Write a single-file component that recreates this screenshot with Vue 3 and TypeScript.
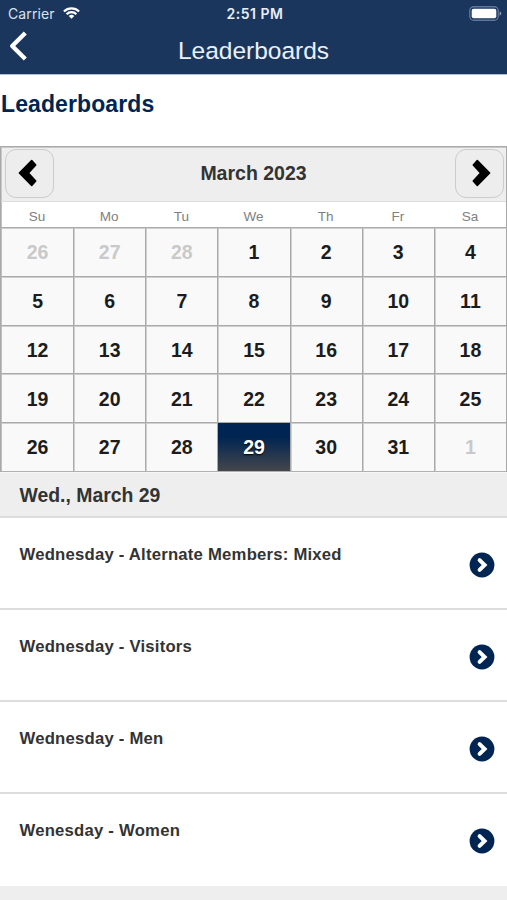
<script setup lang="ts">
interface Day {
  n: number
  other: boolean
  selected: boolean
}

const weekdays: string[] = ['Su', 'Mo', 'Tu', 'We', 'Th', 'Fr', 'Sa']

const days: Day[] = Array.from({ length: 35 }, (_, i) => {
  const date = new Date(2023, 1, 26 + i)
  const other = date.getMonth() !== 2
  return { n: date.getDate(), other, selected: !other && date.getDate() === 29 }
})

const events: string[] = [
  'Wednesday - Alternate Members: Mixed',
  'Wednesday - Visitors',
  'Wednesday - Men',
  'Wenesday - Women',
]
</script>

<template>
  <div class="screen">
    <header class="topbar">
      <div class="status">
        <div class="carrier">
          <span>Carrier</span>
          <svg class="wifi" viewBox="0 0 17 12" fill="none" stroke="#fff" stroke-width="2.1">
            <path d="M0.9 4.5a10.7 10.7 0 0 1 15.2 0" />
            <path d="M3.6 7.2a6.9 6.9 0 0 1 9.8 0" />
            <path d="M8.5 11.8L5.7 9a4 4 0 0 1 5.6 0z" fill="#fff" stroke="none" />
          </svg>
        </div>
        <span class="time">2:51 PM</span>
        <svg class="battery" viewBox="0 0 33 15">
          <rect x="0.75" y="0.75" width="28.5" height="13.5" rx="4" fill="none" stroke="#5f779a" stroke-width="1.3" />
          <rect x="2.7" y="2.7" width="24.6" height="9.6" rx="2" fill="#fff" />
          <path d="M30.6 5.3q1.7 .8 1.7 2.2t-1.7 2.2z" fill="#8c9fb8" />
        </svg>
      </div>
      <div class="nav">
        <svg class="back" viewBox="0 0 20 30" fill="none" stroke="#fff" stroke-width="4.3" stroke-linejoin="round">
          <path d="M17.3 2L4.2 15l13.1 13" />
        </svg>
        <h1>Leaderboards</h1>
        <span></span>
      </div>
    </header>

    <h2 class="heading">Leaderboards</h2>

    <section class="calendar">
      <div class="month">
        <button class="step prev" aria-label="Previous month">
          <svg viewBox="0 0 20 28" stroke="#000" stroke-width="1.6" stroke-linejoin="round">
            <path d="M1.4 14L13.7 1.6l4 4.4L10.4 14l7.3 8-4 4.4z" />
          </svg>
        </button>
        <span>March 2023</span>
        <button class="step next" aria-label="Next month">
          <svg viewBox="0 0 20 28" stroke="#000" stroke-width="1.6" stroke-linejoin="round">
            <path d="M18.6 14L6.3 1.6l-4 4.4L9.6 14l-7.3 8 4 4.4z" />
          </svg>
        </button>
      </div>
      <div class="weekdays">
        <span v-for="w in weekdays" :key="w">{{ w }}</span>
      </div>
      <div class="days">
        <div v-for="(d, i) in days" :key="i" class="day" :class="{ other: d.other, selected: d.selected }">
          {{ d.n }}
        </div>
      </div>
    </section>

    <div class="divider">Wed., March 29</div>

    <ul class="events">
      <li v-for="e in events" :key="e">
        <span>{{ e }}</span>
        <svg viewBox="0 0 26 26">
          <circle cx="13" cy="13" r="12.4" fill="#012552" />
          <path d="M10.6 8.1l5 4.9-5 4.9" fill="none" stroke="#fff" stroke-width="4" stroke-linecap="round" />
        </svg>
      </li>
    </ul>
    <div class="foot"></div>
  </div>
</template>

<style>
body {
  margin: 0;
  background: #fff;
}
</style>

<style scoped>
.screen {
  width: 507px;
  height: 900px;
  overflow: hidden;
  display: flex;
  flex-direction: column;
  background: #fff;
  color: #333;
  font-family: 'Liberation Sans', Arial, sans-serif;
}

.topbar {
  box-sizing: border-box;
  flex: none;
  height: 75px;
  background: #1b365d;
  border-bottom: 1px solid #aebfd2;
  color: #fff;
}

.status {
  height: 27px;
  display: grid;
  grid-template-columns: 1fr auto 1fr;
  align-items: center;
  padding: 0 5px 0 8px;
  font-family: Inter, sans-serif;
}

.carrier {
  display: flex;
  align-items: center;
  gap: 8px;
  font-size: 14px;
  letter-spacing: 0.1px;
  color: #d9e2ee;
}

.wifi {
  width: 17px;
  height: 12px;
  margin-top: -1px;
}

.time {
  font-size: 14px;
  font-weight: 600;
  letter-spacing: 0.5px;
  color: #e8eef6;
}

.battery {
  width: 33px;
  height: 15px;
  justify-self: end;
}

.nav {
  height: 47px;
  display: grid;
  grid-template-columns: 1fr auto 1fr;
  align-items: center;
  padding: 0 8px;
}

.back {
  width: 20px;
  height: 30px;
  margin-top: -10px;
}

h1 {
  margin: 0;
  font-size: 24.5px;
  font-weight: 400;
  line-height: 46px;
  color: #eaf1fa;
}

.heading {
  flex: none;
  height: 71px;
  margin: 0;
  padding-left: 1px;
  font-size: 23px;
  line-height: 58px;
  letter-spacing: 0.1px;
  color: #012552;
}

.calendar {
  flex: none;
  box-sizing: border-box;
  height: 326px;
  border: 1px solid #a9a9a9;
  border-bottom: 0;
}

.month {
  box-sizing: border-box;
  height: 55px;
  display: flex;
  align-items: center;
  justify-content: space-between;
  padding: 0 2px 2px 4px;
  background: #eee;
  border-bottom: 1px solid #ddd;
  box-shadow: inset 1px 1px #c8c8c8;
  font-size: 19.5px;
  font-weight: 700;
}

.month > span {
  margin-right: 2px;
}

.step {
  box-sizing: border-box;
  width: 49px;
  height: 49px;
  padding: 0;
  display: grid;
  place-items: center;
  border: 1px solid #ccc;
  border-radius: 11px;
  background: #ededed;
}

.step svg {
  width: 20px;
  height: 28px;
}

.prev svg {
  margin-right: 4px;
}

.next svg {
  margin-left: 3px;
}

.weekdays {
  height: 25px;
  display: grid;
  grid-template-columns: repeat(7, 1fr);
  box-shadow: inset 1px 0 #c0c0c0;
  font-size: 13.5px;
  line-height: 30px;
  text-align: center;
  color: #808080;
}

.days {
  height: 244px;
  display: grid;
  grid-template-columns: repeat(7, 1fr);
  grid-template-rows: repeat(5, 1fr);
  border-bottom: 1px solid #b0b0b0;
}

.day {
  display: grid;
  place-items: center;
  padding-top: 2px;
  border-top: 1px solid #aaa;
  border-left: 1px solid #aaa;
  box-shadow: inset 1px 1px #d0d0d0;
  background: #f9f9f9;
  color: #1c1c1c;
  font-size: 19.5px;
  font-weight: 700;
}

.day:nth-child(7n + 1) {
  border-left-color: #c0c0c0;
  box-shadow: inset 0 1px #d0d0d0;
}

.day:nth-child(n + 29) {
  padding-top: 0;
}

.other {
  color: #c9c9c9;
}

.selected {
  background: linear-gradient(#012552 0%, #012552 30%, #44474b 100%) padding-box;
  box-shadow: none;
  color: #fff;
  text-shadow: 0 1px 2px #000;
}

.divider {
  flex: none;
  box-sizing: border-box;
  height: 46px;
  padding-left: 19.5px;
  background: #eee;
  border-top: 1px solid #f6f6f6;
  border-bottom: 2px solid #ddd;
  font-size: 19.4px;
  font-weight: 700;
  line-height: 45px;
}

.events {
  flex: none;
  margin: 0;
  padding: 0;
  list-style: none;
}

.events li {
  box-sizing: border-box;
  height: 92px;
  display: flex;
  justify-content: space-between;
  align-items: flex-start;
  padding: 26px 12px 0 19.5px;
  border-bottom: 2px solid #ddd;
  font-size: 16.7px;
  font-weight: 700;
  line-height: 21px;
  letter-spacing: 0.22px;
}

.events li svg {
  width: 26px;
  height: 26px;
  margin-top: 8px;
}

.events li:last-child {
  border-bottom-color: #fff;
}

.foot {
  flex: 1;
  background: #eee;
}
</style>
